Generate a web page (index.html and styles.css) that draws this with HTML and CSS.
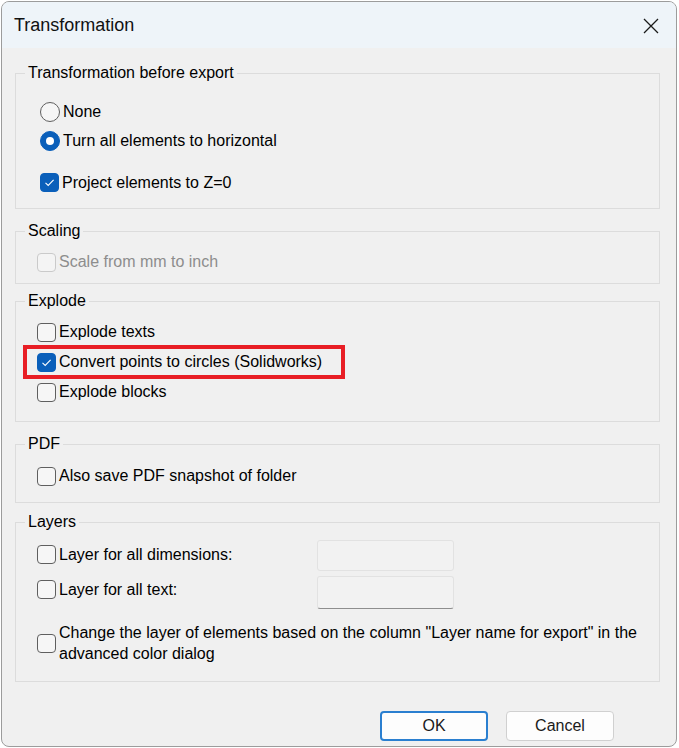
FILE: index.html
```html
<!DOCTYPE html>
<html>
<head>
<meta charset="utf-8">
<link rel="stylesheet" href="styles.css">
</head>
<body>
<div class="dialog">
  <div class="titlebar">
    <span class="title">Transformation</span>
    <svg class="close" width="16" height="16" viewBox="0 0 16 16"><path d="M1 1 L15 15 M15 1 L1 15" stroke="#1a1a1a" stroke-width="1.3" fill="none"/></svg>
  </div>
  <div class="content">
    <fieldset class="group g1">
      <legend>Transformation before export</legend>
      <div class="gbody">
        <div class="row r29"><span class="radio"></span><span class="lbl">None</span></div>
        <div class="row r29"><span class="radio on"></span><span class="lbl">Turn all elements to horizontal</span></div>
        <div class="row r29 gapped"><span class="cb on"><svg width="19" height="19" viewBox="0 0 19 19"><path d="M5.5 9.8 L8.2 12.4 L13.6 6.8" stroke="#fff" stroke-width="1.1" fill="none"/></svg></span><span class="lbl">Project elements to Z=0</span></div>
      </div>
    </fieldset>
    <fieldset class="group g2">
      <legend>Scaling</legend>
      <div class="gbody">
        <div class="row"><span class="cb dis"></span><span class="lbl dim">Scale from mm to inch</span></div>
      </div>
    </fieldset>
    <fieldset class="group g3">
      <legend>Explode</legend>
      <div class="gbody">
        <div class="row"><span class="cb"></span><span class="lbl">Explode texts</span></div>
        <div class="row marked"><span class="cb on"><svg width="19" height="19" viewBox="0 0 19 19"><path d="M5.5 9.8 L8.2 12.4 L13.6 6.8" stroke="#fff" stroke-width="1.1" fill="none"/></svg></span><span class="lbl">Convert points to circles (Solidworks)</span><span class="highlight"></span></div>
        <div class="row"><span class="cb"></span><span class="lbl">Explode blocks</span></div>
      </div>
    </fieldset>
    <fieldset class="group g4">
      <legend>PDF</legend>
      <div class="gbody">
        <div class="row"><span class="cb"></span><span class="lbl">Also save PDF snapshot of folder</span></div>
      </div>
    </fieldset>
    <fieldset class="group g5">
      <legend>Layers</legend>
      <div class="gbody">
        <div class="row r35"><div class="fieldlabel"><span class="cb"></span><span class="lbl">Layer for all dimensions:</span></div><span class="field f1"></span></div>
        <div class="row r35"><div class="fieldlabel"><span class="cb"></span><span class="lbl">Layer for all text:</span></div><span class="field f2"></span></div>
        <div class="row multi"><span class="cb"></span><span class="lbl two">Change the layer of elements based on the column "Layer name for export" in the advanced color dialog</span></div>
      </div>
    </fieldset>
    <div class="buttons">
      <button class="btn default">OK</button>
      <button class="btn">Cancel</button>
    </div>
  </div>
</div>
</body>
</html>
```

FILE: styles.css
```css
html, body {
  margin: 0;
  padding: 0;
  background: #ffffff;
}
body {
  font-family: "Liberation Sans", Arial, sans-serif;
  font-size: 16px;
  color: #000;
}
.dialog {
  margin-left: 1px;
  margin-top: 1px;
  width: 674px;
  height: 744px;
  border: 1px solid #9c9c9c;
  border-radius: 8px;
  overflow: hidden;
  background: #f0f0f0;
}
.titlebar {
  height: 46px;
  background: #eef4f9;
  display: flex;
  align-items: center;
  justify-content: space-between;
  padding: 0 17px 0 12px;
}
.title {
  font-size: 18px;
  color: #111;
}
.close {
  display: block;
  margin-top: 1px;
}
.content {
  padding: 0 16px 0 13px;
}
.group {
  margin: 0;
  padding: 0;
  border: 1px solid #dcdcdc;
  min-width: 0;
}
.group legend {
  margin-left: 9px;
  padding: 0 3px;
  line-height: 18px;
  height: 18px;
}
.gbody { padding-left: 21px; }
.g1 .gbody { padding-left: 24px; padding-top: 15px; padding-bottom: 11px; }
.g2 { margin-top: 13px; }
.g2 .gbody { padding-top: 7px; padding-bottom: 6px; }
.g1 { margin-top: 16px; }
.g3 { margin-top: 8px; }
.g3 .gbody { padding-top: 7px; padding-bottom: 14px; }
.g4 { margin-top: 13px; }
.g4 .gbody { padding-top: 8px; padding-bottom: 11px; }
.g5 { margin-top: 10px; }
.g5 .gbody { padding-top: 6px; padding-bottom: 17px; }
.row {
  display: flex;
  align-items: center;
  height: 30px;
}
.r29 { height: 29px; }
.r35 { height: 35px; }
.gapped { margin-top: 13px; }
.lbl { margin-left: 3px; white-space: nowrap; }
.lbl.dim { color: #8d8d8d; }
.cb {
  box-sizing: border-box;
  width: 19px;
  height: 19px;
  border: 1px solid #5f5f5f;
  border-radius: 4px;
  background: #f6f6f6;
  flex: none;
  display: block;
}
.cb svg { display: block; margin: -1px; }
.cb.on {
  background: #0a5fba;
  border-color: #0a5fba;
}
.cb.dis {
  border-color: #cacaca;
  background: #f4f4f4;
}
.radio {
  box-sizing: border-box;
  width: 20px;
  height: 20px;
  border: 1px solid #5f5f5f;
  border-radius: 50%;
  background: #f6f6f6;
  flex: none;
  display: flex;
  align-items: center;
  justify-content: center;
}
.radio.on {
  background: #0a5fba;
  border-color: #0a5fba;
}
.radio.on::after {
  content: "";
  width: 8px;
  height: 8px;
  border-radius: 50%;
  background: #fff;
}
.marked { position: relative; }
.highlight {
  position: absolute;
  left: -14px;
  top: -2px;
  width: 322px;
  height: 34px;
  box-sizing: border-box;
  border: 4px solid #e81e25;
}
.fieldlabel {
  display: flex;
  align-items: center;
  width: 280px;
}
.field {
  box-sizing: border-box;
  width: 137px;
  border: 1px solid #e2e2e2;
  border-radius: 3px;
  background: #f2f2f2;
}
.f1 { height: 31px; margin-top: 1px; }
.f2 { height: 33px; margin-top: 6px; border-bottom-color: #8e8e8e; }
.multi {
  height: auto;
  margin-top: 15px;
}
.lbl.two {
  white-space: normal;
  line-height: 21px;
  width: 590px;
}
.buttons {
  display: flex;
  justify-content: flex-end;
  gap: 18px;
  margin-top: 29px;
  padding-right: 46px;
}
.btn {
  box-sizing: border-box;
  width: 108px;
  height: 30px;
  border: 1px solid #d0d0d0;
  border-radius: 4px;
  background: #fdfdfd;
  font-family: "Liberation Sans", Arial, sans-serif;
  font-size: 16px;
  color: #1a1a1a;
  padding: 0;
}
.btn.default {
  border: 2px solid #2a7fd0;
}
```
